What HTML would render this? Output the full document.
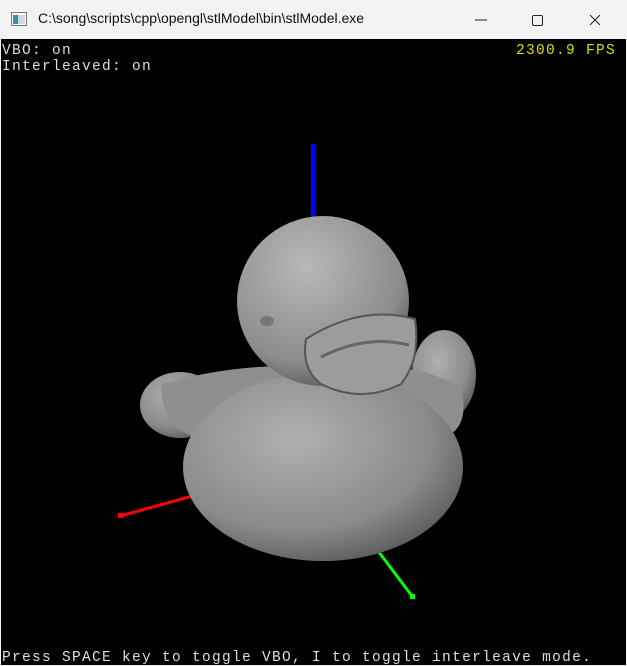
<!DOCTYPE html>
<html><head><style>
body{margin:0;width:627px;height:665px;overflow:hidden;background:#f3f3f3;font-family:"Liberation Sans",sans-serif}
.tb{position:absolute;left:0;top:0;width:627px;height:39px;background:#f3f3f3}
.tt{position:absolute;left:38px;top:10px;font-size:14px;color:#111}
.gl{position:absolute;left:1px;top:39px;width:625px;height:626px;background:#000}
.m{position:absolute;font-family:"Liberation Mono",monospace;font-size:14.5px;letter-spacing:1.3px;color:#ddd;line-height:16px;white-space:pre}
</style></head><body>
<div class="tb">
<svg style="position:absolute;left:11px;top:12px" width="16" height="14"><rect x="0.5" y="0.5" width="15" height="13" fill="#fff" stroke="#777"/><rect x="2" y="3" width="5" height="9" fill="#3a8ca0"/><rect x="7" y="3" width="7" height="9" fill="#cfd8dc"/></svg>
<div class="tt">C:\song\scripts\cpp\opengl\stlModel\bin\stlModel.exe</div>
<svg style="position:absolute;left:470px;top:12px" width="150" height="16"><line x1="5" y1="8" x2="17" y2="8" stroke="#222"/><rect x="62.5" y="3.5" width="10" height="10" rx="1.5" fill="none" stroke="#222"/><path d="M120 3l10 10M130 3l-10 10" stroke="#222"/></svg>
</div>
<div class="gl">
<svg width="625" height="626" style="position:absolute;left:0;top:0">
<defs>
<radialGradient id="g" cx="0.4" cy="0.35" r="0.7"><stop offset="0" stop-color="#b0b0b0"/><stop offset="0.7" stop-color="#8a8a8a"/><stop offset="1" stop-color="#5a5a5a"/></radialGradient>
<radialGradient id="h" cx="0.4" cy="0.3" r="0.7"><stop offset="0" stop-color="#b8b8b8"/><stop offset="0.8" stop-color="#8c8c8c"/><stop offset="1" stop-color="#666"/></radialGradient>
</defs>
<line x1="312" y1="105" x2="312" y2="180" stroke="#00f" stroke-width="4"/>
<line x1="119" y1="477" x2="213" y2="451" stroke="#f00" stroke-width="3"/>
<rect x="117" y="474" width="5" height="5" fill="#f00"/>
<line x1="374" y1="508" x2="411" y2="557" stroke="#0f0" stroke-width="3"/>
<rect x="409" y="555" width="5" height="5" fill="#0f0"/>
<ellipse cx="179" cy="366" rx="40" ry="33" fill="url(#g)"/>
<ellipse cx="443" cy="336" rx="32" ry="45" fill="url(#g)"/>
<path d="M160 345 Q250 320 330 330 Q420 320 460 350 Q470 390 440 400 L200 400 Q160 390 160 345Z" fill="#8f8f8f"/>
<ellipse cx="322" cy="428" rx="140" ry="94" fill="url(#g)"/>
<ellipse cx="322" cy="262" rx="86" ry="85" fill="url(#h)"/>
<path d="M305 300 Q360 265 414 280 Q420 320 400 345 Q360 365 320 345 Q300 330 305 300Z" fill="#9c9c9c" stroke="#555" stroke-width="2"/>
<path d="M320 318 Q365 295 408 306" stroke="#666" stroke-width="3" fill="none"/>
<ellipse cx="266" cy="282" rx="7" ry="5" fill="#777"/>
</svg>
<div class="m" style="left:1px;top:4px">VBO: on
Interleaved: on</div>
<div class="m" style="right:10px;top:4px;color:#dede00">2300.9 FPS</div>
<div class="m" style="left:1px;top:611px">Press SPACE key to toggle VBO, I to toggle interleave mode.</div>
</div>
</body></html>
